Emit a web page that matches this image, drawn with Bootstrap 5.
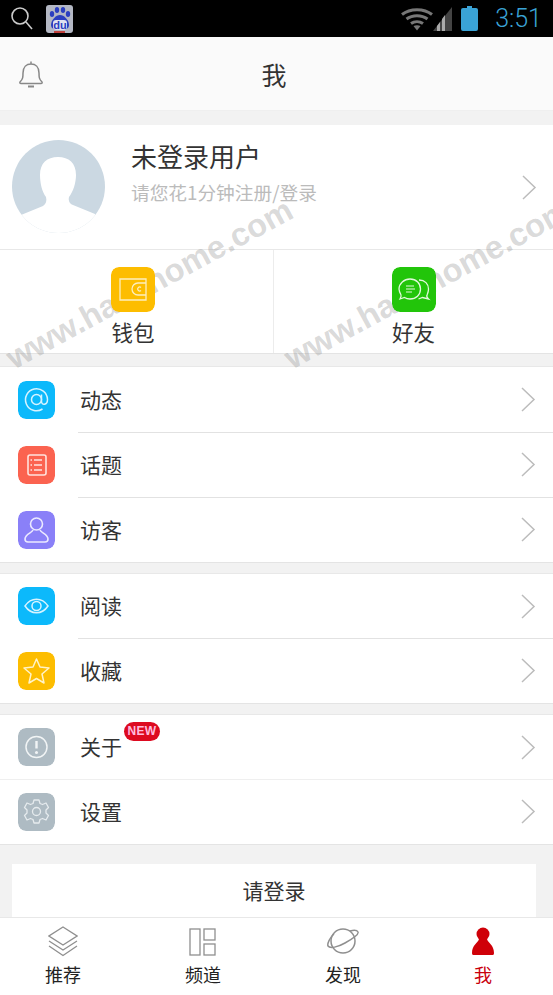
<!DOCTYPE html>
<html lang="zh">
<head>
  <meta charset="UTF-8" />
  <meta name="viewport" content="width=device-width, initial-scale=1.0" />
  <title>我</title>
  <link href="https://cdn.jsdelivr.net/npm/bootstrap@5.3.0/dist/css/bootstrap.min.css" rel="stylesheet" />
  <style>
    body { font-family: "Noto Sans CJK SC", "Liberation Sans", sans-serif; background: #f2f2f2; color: #333; }
    .phone { width: 553px; height: 995px; overflow: hidden; }
    .status-bar { height: 37px; background: #000; padding: 0 11px 0 10px; }
    .status-time { font-family: Roboto, sans-serif; font-weight: 300; font-size: 25px; color: #3aa3d6; line-height: 1; margin-left: 17px; }
    .baidu-box { width: 27px; height: 28px; margin-left: 13px; background: #b4b8c4; border-radius: 3px; }
    .baidu-text { font: bold 11px/1 "Liberation Sans", sans-serif; fill: #2b3fc0; }
    .app-head { height: 74px; background: #fafafa; border-bottom: 1px solid #efefef; padding-left: 18px; }
    .app-title { left: 0; right: 5px; top: 0; bottom: 0; font-size: 25px; color: #333; line-height: 74px; text-align: center; }
    .profile { height: 125px; margin-top: 14px; background: #fff; border-bottom: 1px solid #e8e8e8; padding: 0 16px 0 12px; }
    .avatar { width: 93px; height: 93px; margin-top: -2px; flex: none; }
    .profile-name { font-size: 26px; line-height: 36px; color: #333; }
    .profile-sub { font-size: 18.7px; line-height: 30px; color: #bbb; margin-top: 3px; }
    .profile-text { margin-left: 26px; margin-top: -30px; }
    .quick-row { height: 104px; background: #fff; border-bottom: 1px solid #e4e4e4; }
    .quick-cell { width: 273px; padding: 17px 7px 0 0; }
    .quick-cell + .quick-cell { flex-grow: 1; width: auto; padding-right: 0; border-left: 1px solid #ececec; }
    .quick-icon { width: 44px; height: 45px; border-radius: 8px; display: block; z-index: 2; }
    .quick-label { font-size: 21.5px; line-height: 30px; color: #333; margin-top: 5px; }
    .menu-group { background: #fff; border-top: 1px solid #e8e8e8; border-bottom: 1px solid #e4e4e4; border-radius: 0; }
    .menu-row { height: 65px; padding: 0 17px 0 18px; border: 0; background: transparent; }
    .menu-tight .menu-row { height: 64px; }
    .menu-tight .menu-row + .menu-row { height: 65px; }
    .menu-row + .menu-row::before { content: ""; position: absolute; top: 0; left: 78px; right: 0; border-top: 1px solid #e2e2e2; }
    .menu-group.full-line .menu-row + .menu-row::before { left: 0; border-color: #efefef; }
    .menu-icon { width: 37px; height: 38px; border-radius: 8px; flex: none; display: block; z-index: 2; }
    .menu-label { font-size: 21px; line-height: 30px; margin-left: 25px; margin-top: -2px; color: #333; }
    .new-tag { left: 124px; top: 7px; width: 36px; height: 19px; border-radius: 10px; background: #dd0a20; color: #fbd; font: bold 12px/19px "Liberation Sans", sans-serif; text-align: center; letter-spacing: .3px; }
    .login-btn { height: 53px; margin: 19px 17px 0 12px; background: #fff; font-size: 21px; line-height: 53px; text-align: center; color: #333; }
    .tab-bar { height: 79px; background: #fff; border-top: 1px solid #e8e8e8; margin-left: -7px; width: 567px; }
    .tab-item { width: 140px; flex: none; padding-top: 8px; font-size: 18px; line-height: 24px; color: #222; }
    .tab-item svg { display: block; margin-bottom: 5px; }
    .tab-on { color: #c9000c; }
    .watermark { font: bold 32.5px/1 "Liberation Sans", sans-serif; color: rgba(130,130,130,.3); white-space: nowrap; transform-origin: 0 0; transform: rotate(-28.5deg); pointer-events: none; z-index: 1; }
    .wm-a { left: 1px; top: 346px; }
    .wm-b { left: 279px; top: 346px; }
  </style>
</head>
<body>
  <div class="phone position-relative">

    <div class="status-bar d-flex align-items-center">
      <svg width="23" height="25" viewBox="0 0 23 25" fill="none" stroke="#ccc" stroke-width="1.600"><circle cx="10" cy="10" r="8"/><path d="M16 16l6 7"/></svg>
      <div class="baidu-box d-flex">
        <svg width="27" height="28" viewBox="0 0 27 28">
          <g fill="#2b3fc0"><ellipse cx="6" cy="9" rx="2.2" ry="3"/><ellipse cx="11" cy="5" rx="2.2" ry="3"/><ellipse cx="17" cy="5" rx="2.2" ry="3"/><ellipse cx="22" cy="9" rx="2.2" ry="3"/><path d="M14 10c4 0 9 5 9 10 0 4-4 5-9 5s-9-1-9-5c0-5 5-10 9-10z"/></g>
          <rect x="7" y="15" width="14" height="10" rx="3" fill="#dfe2f0"/>
          <text x="14" y="24" text-anchor="middle" class="baidu-text">du</text>
          <path d="M8 27h11" stroke="#c0413c" stroke-width="2"/>
        </svg>
      </div>
      <div class="ms-auto d-flex align-items-center">
        <svg width="32" height="24" viewBox="0 0 32 24" fill="none" stroke="#777" stroke-width="3"><path d="M1 7.500C9 1 23 1 31 7.500"/><path d="M5.500 12c6-4.500 15-4.500 21 0"/><path d="M10 16.500c3.500-2.500 8.500-2.500 12 0"/><path d="M16 23.500l-3.500-4.500c2-1 5-1 7 0z" fill="#777" stroke="none"/></svg>
        <svg width="19" height="24" viewBox="0 0 19 24"><path d="M0 24L19 0v24z" fill="#444"/><path d="M4 24v-5l3-4v9zM9 24V12l3-4v16z" fill="#aaa"/></svg>
        <svg style="margin-left:9px" width="17" height="25" viewBox="0 0 17 25"><path d="M6 0h5v2h4a2 2 0 0 1 2 2v19a2 2 0 0 1-2 2H2a2 2 0 0 1-2-2V4a2 2 0 0 1 2-2h4z" fill="#3aa3d6"/></svg>
        <span class="status-time">3:51</span>
      </div>
    </div>

    <div class="app-head position-relative d-flex align-items-center">
      <div class="app-title position-absolute">我</div>
      <svg class="position-relative" width="26" height="28" viewBox="0 0 26 28" fill="none" stroke="#888" stroke-width="1.500"><path d="M13 1.500v2.500M2 22c3-3 3-5 3-9 0-6 3.500-9 8-9s8 3 8 9c0 4 0 6 3 9 .5 1 0 1.500-1 1.500H3c-1 0-1.500-.5-1-1.500z"/><path d="M10 26.500h6" stroke-width="2"/></svg>
    </div>

    <div class="profile d-flex align-items-center">
      <svg class="avatar" viewBox="0 0 93 93">
        <defs><clipPath id="avatarClip"><circle cx="46.500" cy="46.500" r="46.500"/></clipPath></defs>
        <g clip-path="url(#avatarClip)">
          <rect width="93" height="93" fill="#cbd8e2"/>
          <path d="M46 17c11 0 18 6 18 18 0 8-3 17-7 22-1 4 1 7 4 8l22 9v19H9V75l22-9c3-2 4-5 3-9-4-5-6-14-6-22 0-12 7-18 18-18z" fill="#fff"/>
        </g>
      </svg>
      <div class="profile-text flex-grow-1">
        <div class="profile-name">未登录用户</div>
        <div class="profile-sub">请您花1分钟注册/登录</div>
      </div>
      <svg width="15" height="25" viewBox="0 0 15 25" fill="none" stroke="#bcbcbc" stroke-width="1.500"><path d="M1 1l12 11.500L1 24"/></svg>
    </div>

    <div class="quick-row d-flex">
      <div class="quick-cell d-flex flex-column align-items-center">
        <svg class="quick-icon position-relative" viewBox="0 0 44 45">
          <rect width="44" height="45" rx="8" fill="#fdbd00"/>
          <g fill="none" stroke="#fdeebf" stroke-width="1.300"><path d="M9 12h26v21H9z"/><path d="M35 16H27a5.500 5.500 0 0 0 0 12h8"/><path d="M30 20.500a2 2 0 1 0 0 3"/></g>
        </svg>
        <div class="quick-label">钱包</div>
      </div>
      <div class="quick-cell d-flex flex-column align-items-center">
        <svg class="quick-icon position-relative" viewBox="0 0 44 45">
          <rect width="44" height="45" rx="8" fill="#22c50a"/>
          <g fill="none" stroke="#e2f8dc" stroke-width="1.300"><path d="M18 12c6.500 0 10.500 4.500 10.500 10 0 6-4.500 10-10.500 10-2 0-4-.5-5.500-1.500L8 32c1-2 1.500-3 1-4-1-2-2-4-2-6 0-5.500 5-10 11-10z"/><path d="M27 13c6 0 9.500 4 9.500 9 0 3-1 4.500-1.500 6-.5 1 0 2.500 1.500 4l-6-1.500-4 1.500"/><path d="M14 19h8M14 22h9M14 25h6" stroke-width="1"/></g>
        </svg>
        <div class="quick-label">好友</div>
      </div>
    </div>

    <div class="menu-group list-group list-group-flush" style="margin-top:12px">
      <div class="menu-row list-group-item d-flex align-items-center">
        <svg class="menu-icon position-relative" viewBox="0 0 37 38"><rect width="37" height="38" rx="8" fill="#0cb9fb"/><g fill="none" stroke="#d6f3ff" stroke-width="1.500"><circle cx="18.500" cy="18.500" r="5"/><path d="M23.500 13.500v7c0 4 6 4 6-2a11 11 0 1 0-5 9.500"/></g></svg>
        <span class="menu-label">动态</span>
        <svg class="ms-auto" width="15" height="25" viewBox="0 0 15 25" fill="none" stroke="#bcbcbc" stroke-width="1.500"><path d="M1 1l12 11.500L1 24"/></svg>
      </div>
      <div class="menu-row list-group-item d-flex align-items-center">
        <svg class="menu-icon position-relative" viewBox="0 0 37 38"><rect width="37" height="38" rx="8" fill="#fb6350"/><g fill="none" stroke="#ffe3de" stroke-width="1.600"><rect x="10" y="9" width="18" height="20" rx="2"/><path d="M16 14h8M16 19h8M16 24h8M12.500 14h1.500M12.500 19h1.500M12.500 24h1.500"/></g></svg>
        <span class="menu-label">话题</span>
        <svg class="ms-auto" width="15" height="25" viewBox="0 0 15 25" fill="none" stroke="#bcbcbc" stroke-width="1.500"><path d="M1 1l12 11.500L1 24"/></svg>
      </div>
      <div class="menu-row list-group-item d-flex align-items-center">
        <svg class="menu-icon position-relative" viewBox="0 0 37 38"><rect width="37" height="38" rx="8" fill="#8a80f8"/><g fill="none" stroke="#ebe9ff" stroke-width="1.600"><circle cx="18.500" cy="13" r="6"/><path d="M15 19c-1 3-8 4-8 9 0 2 1 3 3 3h17c2 0 3-1 3-3 0-5-7-6-8-9"/></g></svg>
        <span class="menu-label">访客</span>
        <svg class="ms-auto" width="15" height="25" viewBox="0 0 15 25" fill="none" stroke="#bcbcbc" stroke-width="1.500"><path d="M1 1l12 11.500L1 24"/></svg>
      </div>
    </div>

    <div class="menu-group menu-tight list-group list-group-flush" style="margin-top:10px">
      <div class="menu-row list-group-item d-flex align-items-center">
        <svg class="menu-icon position-relative" viewBox="0 0 37 38"><rect width="37" height="38" rx="8" fill="#0cb9fb"/><g fill="none" stroke="#d6f3ff" stroke-width="1.500"><path d="M7 19c6-9 17-9 23 0-6 9-17 9-23 0z"/><circle cx="18.500" cy="19" r="4.500"/></g></svg>
        <span class="menu-label">阅读</span>
        <svg class="ms-auto" width="15" height="25" viewBox="0 0 15 25" fill="none" stroke="#bcbcbc" stroke-width="1.500"><path d="M1 1l12 11.500L1 24"/></svg>
      </div>
      <div class="menu-row list-group-item d-flex align-items-center">
        <svg class="menu-icon position-relative" viewBox="0 0 37 38"><rect width="37" height="38" rx="8" fill="#fdbd00"/><path d="M18.500 7l3.500 8 9 1-7 6 2 9-7.500-4.500L11 31l2-9-7-6 9-1z" fill="none" stroke="#fff3c8" stroke-width="1.500" stroke-linejoin="round"/></svg>
        <span class="menu-label">收藏</span>
        <svg class="ms-auto" width="15" height="25" viewBox="0 0 15 25" fill="none" stroke="#bcbcbc" stroke-width="1.500"><path d="M1 1l12 11.500L1 24"/></svg>
      </div>
    </div>

    <div class="menu-group menu-tight full-line list-group list-group-flush" style="margin-top:10px">
      <div class="menu-row list-group-item d-flex align-items-center">
        <svg class="menu-icon position-relative" viewBox="0 0 37 38"><rect width="37" height="38" rx="8" fill="#aebbc3"/><circle cx="18.500" cy="19" r="10.500" fill="none" stroke="#f1f4f5" stroke-width="1.500"/><path d="M18.500 13v7.500" stroke="#f1f4f5" stroke-width="2.400"/><circle cx="18.500" cy="24.500" r="1.500" fill="#f1f4f5"/></svg>
        <span class="menu-label">关于</span>
        <span class="new-tag position-absolute">NEW</span>
        <svg class="ms-auto" width="15" height="25" viewBox="0 0 15 25" fill="none" stroke="#bcbcbc" stroke-width="1.500"><path d="M1 1l12 11.500L1 24"/></svg>
      </div>
      <div class="menu-row list-group-item d-flex align-items-center">
        <svg class="menu-icon position-relative" viewBox="0 0 37 38"><rect width="37" height="38" rx="8" fill="#aebbc3"/><g fill="none" stroke="#e6ebee" stroke-width="1.300" stroke-linejoin="round"><path d="M16 7h5l1 3.500 2.500 1 3.500-1.500 2.500 4.500-2.500 2.500v3l2.500 2.500-2.500 4.500-3.500-1.500-2.500 1-1 3.500h-5l-1-3.500-2.500-1L9 27l-2.500-4.500L9 20v-3l-2.500-2.500L9 10l3.500 1.500 2.500-1z"/><circle cx="18.500" cy="18.500" r="4"/></g></svg>
        <span class="menu-label">设置</span>
        <svg class="ms-auto" width="15" height="25" viewBox="0 0 15 25" fill="none" stroke="#bcbcbc" stroke-width="1.500"><path d="M1 1l12 11.500L1 24"/></svg>
      </div>
    </div>

    <div class="login-btn">请登录</div>

    <div class="tab-bar d-flex">
      <div class="tab-item d-flex flex-column align-items-center">
        <svg width="30" height="31" viewBox="0 0 30 31" fill="none" stroke="#8f8f8f" stroke-width="1.300"><path d="M15 1l14 9-14 9-14-9z"/><path d="M1 15l14 9 14-9"/><path d="M1 20l14 9.500L29 20"/></svg>
        <span>推荐</span>
      </div>
      <div class="tab-item d-flex flex-column align-items-center">
        <svg width="28" height="31" viewBox="0 0 28 31" fill="none" stroke="#8f8f8f" stroke-width="1.300"><rect x="1" y="3" width="10" height="26"/><rect x="15" y="3" width="11" height="11"/><rect x="15" y="18" width="11" height="11"/></svg>
        <span>频道</span>
      </div>
      <div class="tab-item d-flex flex-column align-items-center">
        <svg width="33" height="31" viewBox="0 0 33 31" fill="none" stroke="#8f8f8f" stroke-width="1.500"><circle cx="16" cy="15" r="12"/><path d="M7 8C3 11 0 18 1 20c2 3 10 1 17-3S32 8 31 6c-1-2-4-2-8-1"/></svg>
        <span>发现</span>
      </div>
      <div class="tab-item tab-on d-flex flex-column align-items-center">
        <svg width="24" height="31" viewBox="0 0 24 31"><circle cx="12" cy="8" r="6.500" fill="#cf0008"/><path d="M8 13h8c1 4 7 6 7 14 0 2-1 2-2 2H3c-1 0-2 0-2-2 0-8 6-10 7-14z" fill="#cf0008"/></svg>
        <span>我</span>
      </div>
    </div>

    <div class="watermark wm-a position-absolute">www.hackhome.com</div>
    <div class="watermark wm-b position-absolute">www.hackhome.com</div>
  </div>

  <script src="https://cdn.jsdelivr.net/npm/bootstrap@5.3.0/dist/js/bootstrap.bundle.min.js"></script>
</body>
</html>
